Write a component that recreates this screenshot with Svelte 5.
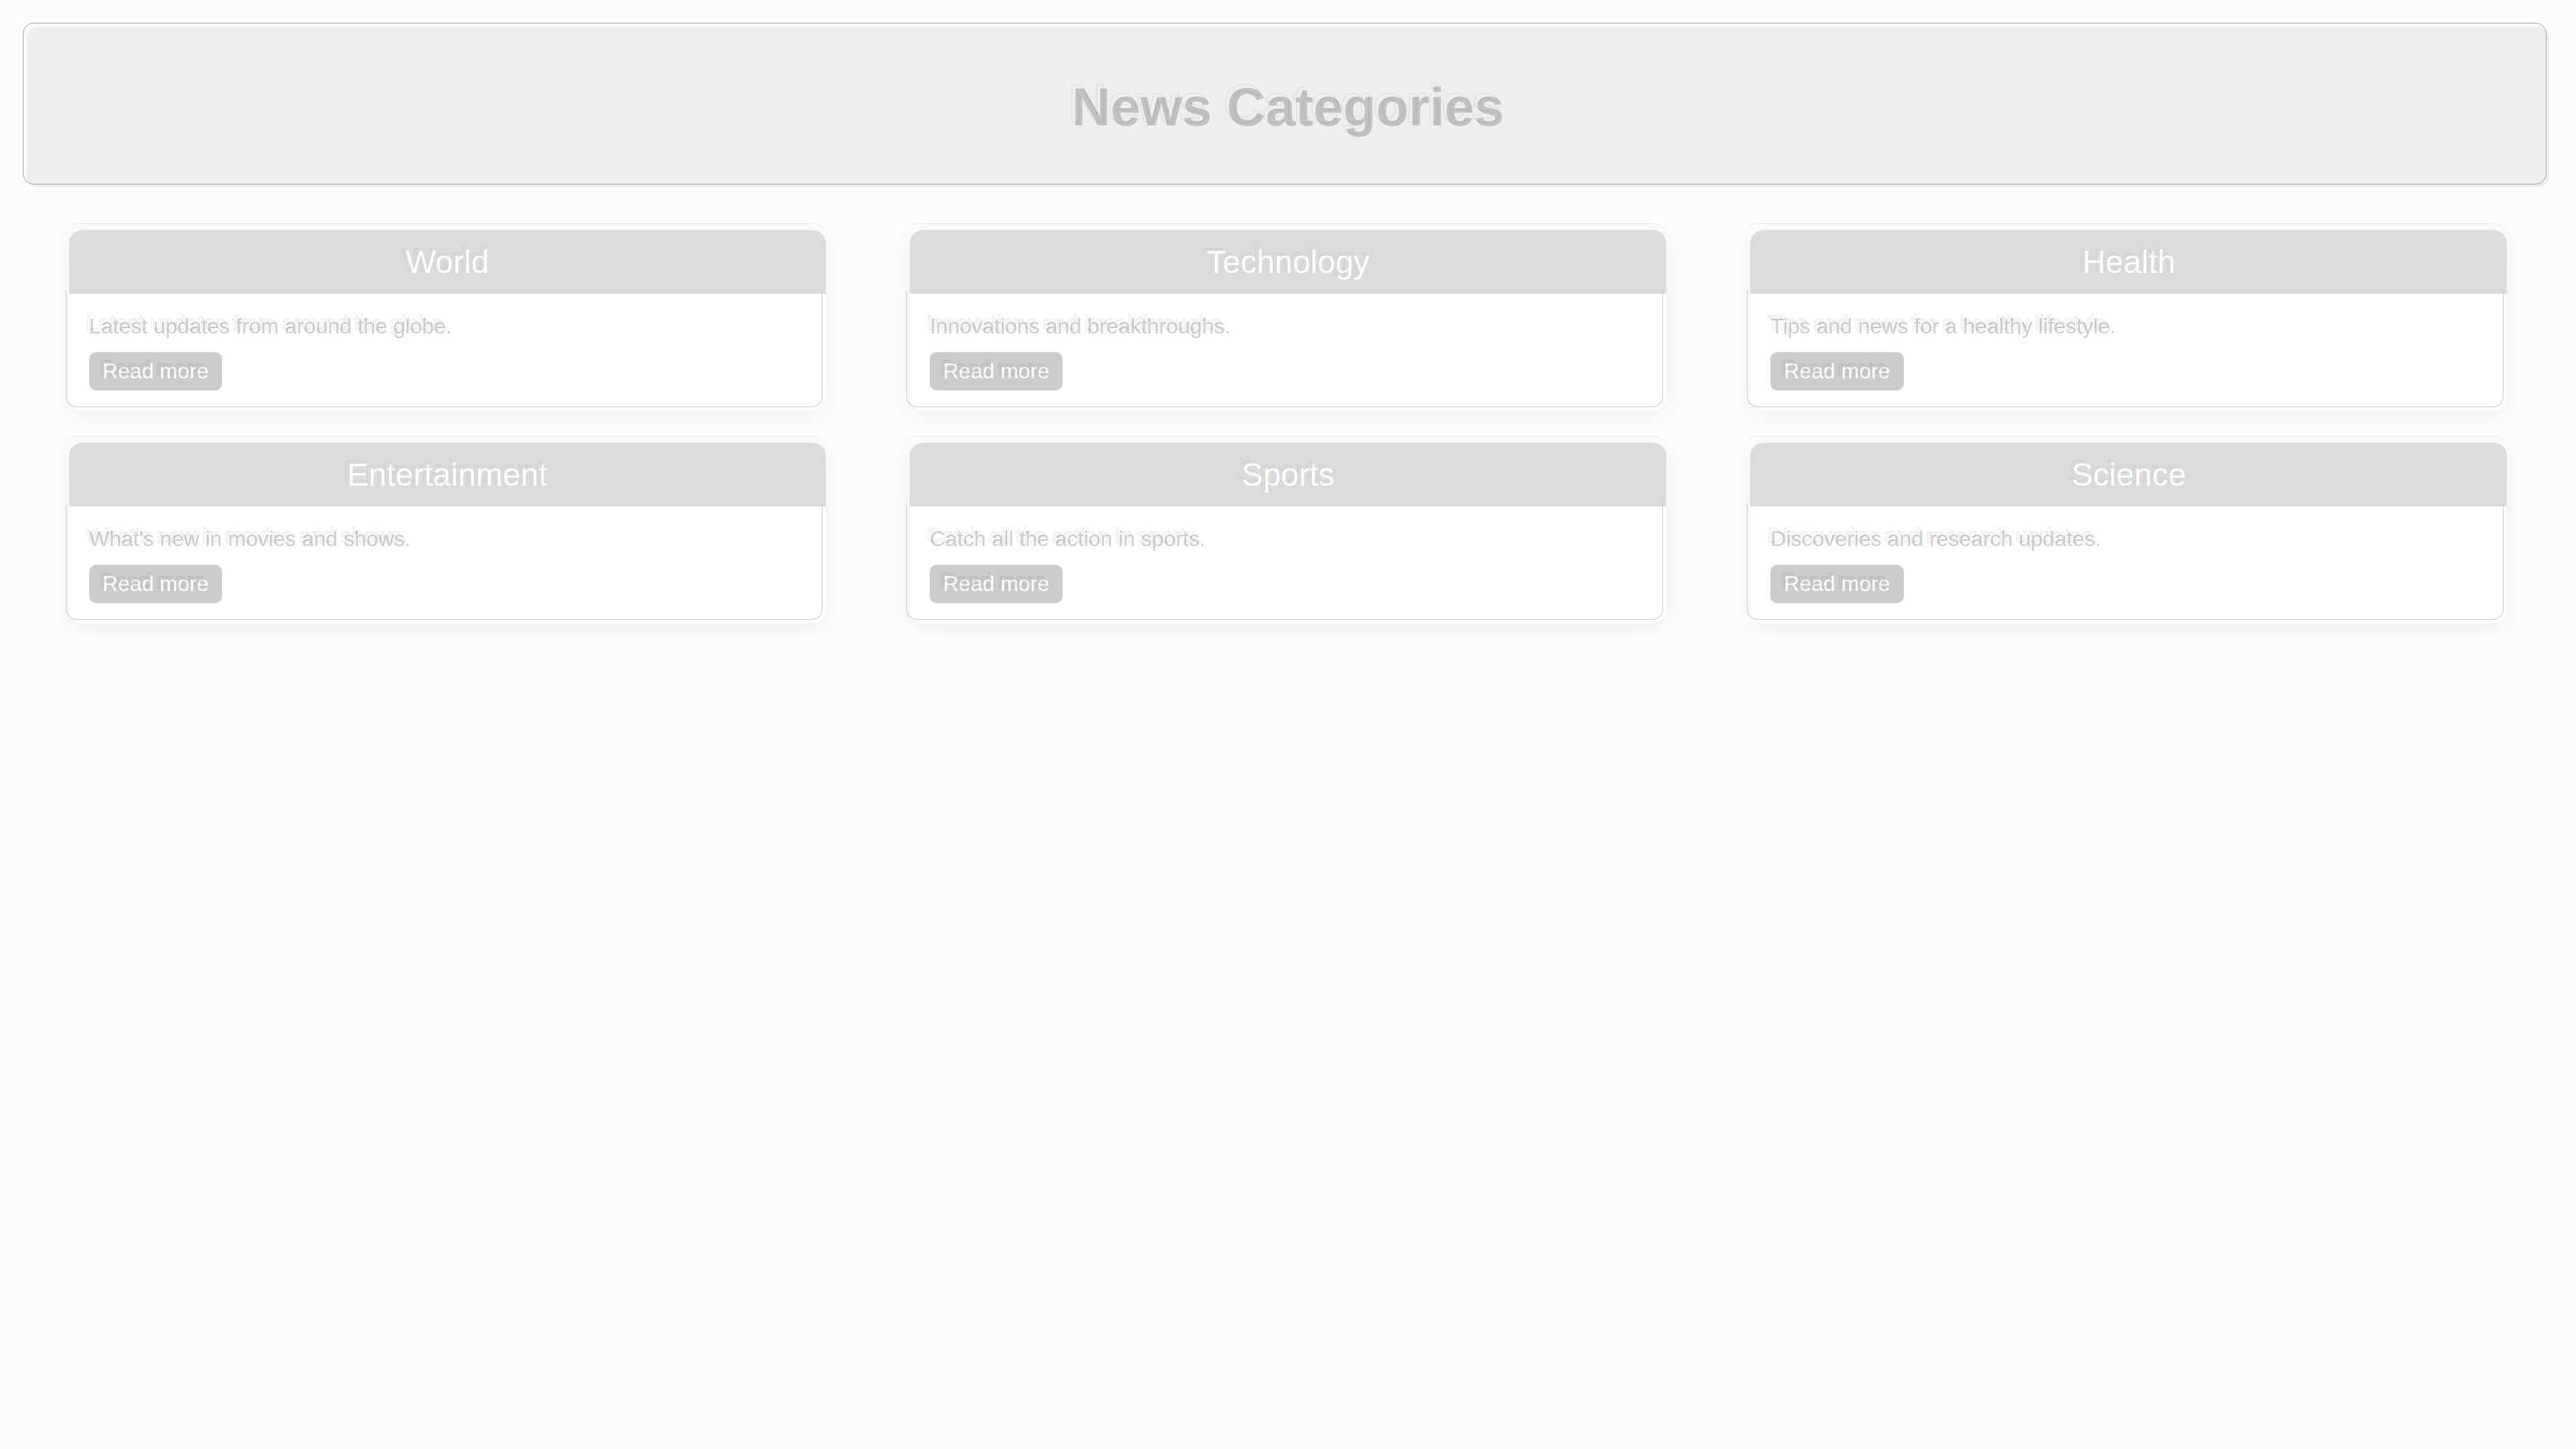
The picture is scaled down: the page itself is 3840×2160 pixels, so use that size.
<script>
  const categories = [
    { title: 'World', text: 'Latest updates from around the globe.' },
    { title: 'Technology', text: 'Innovations and breakthroughs.' },
    { title: 'Health', text: 'Tips and news for a healthy lifestyle.' },
    { title: 'Entertainment', text: "What's new in movies and shows." },
    { title: 'Sports', text: 'Catch all the action in sports.' },
    { title: 'Science', text: 'Discoveries and research updates.' }
  ];
</script>

<div class="page">
  <header class="banner">
    <h1 class="etched" data-text="News Categories">News Categories</h1>
  </header>

  <main class="grid">
    {#each categories as category}
      <article class="card">
        <h2><span class="etched" data-text={category.title}>{category.title}</span></h2>
        <div class="body">
          <p class="etched" data-text={category.text}>{category.text}</p>
          <a href="#more"><span class="etched" data-text="Read more">Read more</span></a>
        </div>
      </article>
    {/each}
  </main>
</div>

<style>
  :global(body) {
    margin: 0;
    background: #fcfcfc;
  }

  .page {
    padding: 40px;
    font-family: 'Liberation Sans', Arial, sans-serif;
    font-size: 32px;
    line-height: 37px;
  }

  h1,
  h2,
  p {
    margin: 0;
  }

  .banner {
    position: relative;
    padding: 64px;
    border-radius: 16px;
    background: #eee;
    text-align: center;
  }

  /* Hairline frame, shifted up and left of the banner */
  .banner::after {
    content: '';
    position: absolute;
    inset: -6px 4px 4px -6px;
    border: 1px solid #a0a0a0;
    border-radius: 16px;
    pointer-events: none;
  }

  h1 {
    color: #c1c1c1;
    font-size: 80px;
    line-height: 111px;
  }

  .grid {
    display: grid;
    grid-template-columns: repeat(3, 1fr);
    row-gap: 48px;
    justify-items: center;
    margin-top: 64px;
  }

  .card {
    position: relative;
    width: 90%;
    border-radius: 20px;
    background: #fff;
    box-shadow: 0 8px 32px rgba(0, 0, 0, 0.05);
  }

  /* Faint arc above the card */
  .card::before {
    content: '';
    position: absolute;
    inset: -10px 0 auto -10px;
    height: 32px;
    border-top: 1px solid #e8e8e8;
    border-radius: 20px 20px 0 0;
  }

  /* Hairline frame around the card body */
  .card::after {
    content: '';
    position: absolute;
    inset: 90px 5px 5px -5px;
    border: 1px solid #c8c8c8;
    border-top: 0;
    border-radius: 0 0 16px 16px;
    pointer-events: none;
  }

  h2 {
    padding: 20px;
    border-radius: 20px 20px 0 0;
    background: #dbdbdb;
    color: #fff;
    font-size: 48px;
    font-weight: 400;
    line-height: 55px;
    text-align: center;
  }

  .body {
    display: flex;
    flex-direction: column;
    align-items: flex-start;
    gap: 20px;
    padding: 30px;
    color: #cecece;
  }

  a {
    padding: 10px 20px;
    border-radius: 10px;
    background: #ccc;
    color: #fff;
    text-decoration: none;
  }

  .etched {
    position: relative;
  }

  /* Thin offset contour of the lettering */
  .etched::after {
    content: attr(data-text);
    position: absolute;
    inset: -5px 5px auto -5px;
    color: transparent;
    white-space: nowrap;
    -webkit-text-stroke: 1px rgba(0, 0, 0, 0.12);
    pointer-events: none;
  }

  h1.etched::after,
  h2 .etched::after {
    -webkit-text-stroke-color: rgba(0, 0, 0, 0.09);
  }
</style>
